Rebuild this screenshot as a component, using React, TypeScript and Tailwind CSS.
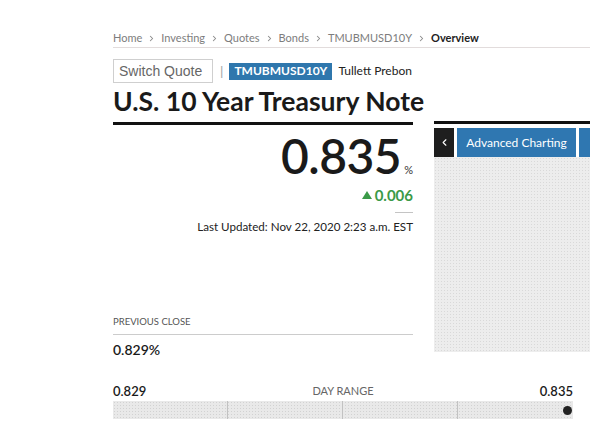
import React from 'react';
import { ChevronRight, ChevronLeft } from 'lucide-react';

const crumbs = ['Home', 'Investing', 'Quotes', 'Bonds', 'TMUBMUSD10Y'];

const Breadcrumb: React.FC = () => (
  <div className="flex items-center pt-[30px] pb-[1px] leading-4 text-[11px] text-[#7d7d7d] border-b border-[#e2dcdc]">
    {crumbs.map((c) => (
      <React.Fragment key={c}>
        <span>{c}</span>
        <ChevronRight className="w-[9px] h-[9px] mx-[5px] text-[#8a8a8a]" strokeWidth={2.8} />
      </React.Fragment>
    ))}
    <span className="font-bold text-[#222]">Overview</span>
  </div>
);

const QuoteHeader: React.FC = () => (
  <div className="flex items-center h-[24px] mt-[11px]">
    <div className="w-[100px] h-[24px] border border-[#cfcfcf] flex items-center pl-[5px] font-['Liberation_Sans',sans-serif] text-[14px] text-[#666]">
      Switch Quote
    </div>
    <span className="ml-[7px] text-[#aaa] text-[13px] font-['Liberation_Sans',sans-serif]">|</span>
    <span className="ml-[6px] h-[17px] px-[5px] flex items-center bg-[#2f77ad] text-white font-bold text-[12px]">
      TMUBMUSD10Y
    </span>
    <span className="ml-[6px] text-[12px] text-[#222]">Tullett Prebon</span>
  </div>
);

const PriceColumn: React.FC = () => (
  <div className="w-[300px] flex flex-col">
    <h1 className="mt-[3px] pb-[6px] border-b-[3px] border-[#111] text-[26.5px] leading-[30px] font-bold text-[#1a1a1a] whitespace-nowrap">
      U.S. 10 Year Treasury Note
    </h1>
    <div className="mt-[7px] h-[48px] flex items-end justify-end">
      <span className="text-[48px] leading-[48px] font-semibold text-[#1a1a1a] tracking-[-0.5px]">0.835</span>
      <span className="ml-[3px] mb-[5px] text-[11px] leading-none text-[#333]">%</span>
    </div>
    <div className="mt-[5px] flex items-center justify-end leading-5 text-[15px] font-bold text-[#3b9a48]">
      <svg width="10" height="8" viewBox="0 0 10 8" className="mr-[3px]">
        <path d="M5 0 L10 8 L0 8 Z" fill="#3b9a48" />
      </svg>
      0.006
    </div>
    <div className="mt-[7px] self-end w-[18px] h-px bg-[#c4c4c4]" />
    <div className="mt-[6px] text-right text-[11.6px] leading-4 text-[#222]">
      Last Updated: Nov 22, 2020 2:23 a.m. EST
    </div>
    <div className="mt-[80px] pb-[5px] border-b border-[#cccccc] text-[9.5px] leading-[14px] text-[#555] uppercase">
      Previous Close
    </div>
    <div className="mt-[5px] text-[14px] leading-5 font-semibold text-[#1a1a1a]">0.829%</div>
  </div>
);

const ChartPanel: React.FC = () => (
  <div className="ml-[21px] mt-[38px] w-[156px] border-t-[3px] border-[#111]">
    <div className="mt-[4px] flex gap-[3px] h-[29px] overflow-hidden">
      <div className="w-[20px] shrink-0 bg-[#1e1e1e] flex items-center justify-center text-white">
        <ChevronLeft className="w-[11px] h-[11px]" strokeWidth={2.5} />
      </div>
      <div className="w-[119px] shrink-0 bg-[#2f77b1] flex items-center justify-center text-white text-[12px]">
        Advanced Charting
      </div>
      <div className="w-[60px] shrink-0 bg-[#2f77b1]" />
    </div>
    <div className="h-[195px] bg-[#ededed] bg-[radial-gradient(#d9d9d9_0.8px,transparent_0.9px)] bg-[length:3px_3px]" />
  </div>
);

const DayRange: React.FC = () => (
  <div className="w-[460px] mt-[22px]">
    <div className="flex items-center justify-between leading-[18px]">
      <span className="text-[13px] font-semibold text-[#1a1a1a]">0.829</span>
      <span className="text-[11px] text-[#666] uppercase">Day Range</span>
      <span className="text-[13px] font-semibold text-[#1a1a1a]">0.835</span>
    </div>
    <div className="mt-[1px] h-[18px] grid grid-cols-4 bg-[#e9e9e9] bg-[radial-gradient(#d2d2d2_0.8px,transparent_0.9px)] bg-[length:3px_3px]">
      <div className="border-r border-[#c2c2c2]" />
      <div className="border-r border-[#c2c2c2]" />
      <div className="border-r border-[#c2c2c2]" />
      <div className="flex items-center justify-end pr-[1px]">
        <div className="w-[9px] h-[9px] rounded-full bg-[#222]" />
      </div>
    </div>
  </div>
);

export default function App() {
  return (
    <div className="w-[590px] h-[424px] overflow-hidden bg-white pl-[113px] font-['Lato','Liberation_Sans',sans-serif]">
      <Breadcrumb />
      <QuoteHeader />
      <div className="flex items-start">
        <PriceColumn />
        <ChartPanel />
      </div>
      <DayRange />
    </div>
  );
}
